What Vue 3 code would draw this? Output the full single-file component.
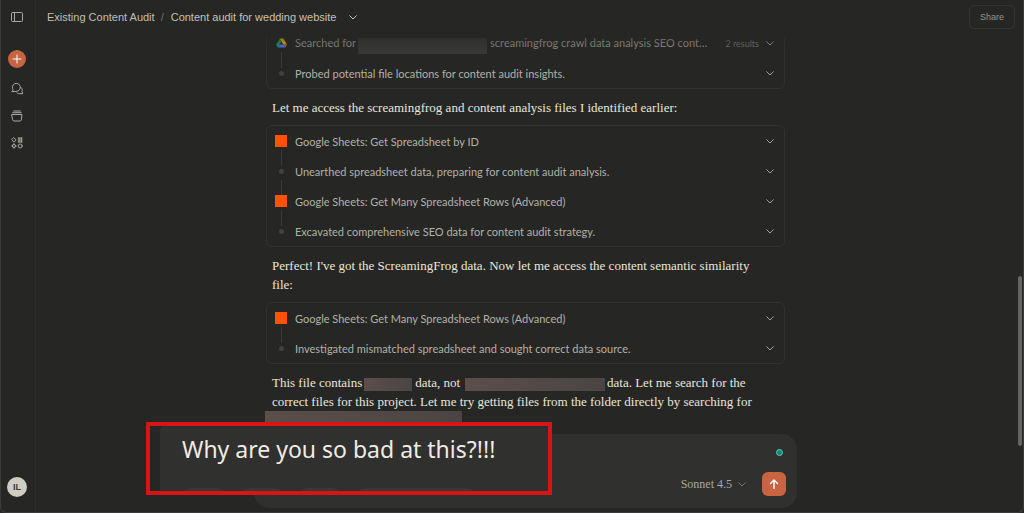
<script setup>
import { ref } from 'vue'

const message = ref('Why are you so bad at this?!!!')

const groups = [
  {
    id: 'search',
    steps: [
      { kind: 'drive', before: 'Searched for', after: 'screamingfrog crawl data analysis SEO cont…', note: '2 results' },
      { kind: 'dot', text: 'Probed potential file locations for content audit insights.' }
    ],
    lines: [['Let me access the screamingfrog and content analysis files I identified earlier:']]
  },
  {
    id: 'sheets',
    steps: [
      { kind: 'sheet', text: 'Google Sheets: Get Spreadsheet by ID' },
      { kind: 'dot', text: 'Unearthed spreadsheet data, preparing for content audit analysis.' },
      { kind: 'sheet', text: 'Google Sheets: Get Many Spreadsheet Rows (Advanced)' },
      { kind: 'dot', text: 'Excavated comprehensive SEO data for content audit strategy.' }
    ],
    lines: [
      ["Perfect! I've got the ScreamingFrog data. Now let me access the content semantic similarity"],
      ['file:']
    ]
  },
  {
    id: 'similarity',
    steps: [
      { kind: 'sheet', text: 'Google Sheets: Get Many Spreadsheet Rows (Advanced)' },
      { kind: 'dot', text: 'Investigated mismatched spreadsheet and sought correct data source.' }
    ],
    lines: [
      ['This file contains', { hide: 'short' }, 'data, not', { hide: 'long' }, 'data. Let me search for the'],
      ['correct files for this project. Let me try getting files from the folder directly by searching for'],
      [{ hide: 'full' }]
    ]
  }
]
</script>

<template>
  <div class="app">
    <nav class="rail" aria-label="Main">
      <button class="icon toggle" aria-label="Toggle sidebar">
        <svg width="12" height="10" viewBox="0 0 12 10"><rect x=".5" y=".5" width="11" height="9" rx="1" /><path d="M3.5 .5v9" /></svg>
      </button>
      <button class="icon new" aria-label="New chat">
        <svg width="10" height="10" viewBox="0 0 10 10"><path d="M5 1v8M1 5h8" /></svg>
      </button>
      <button class="icon" aria-label="Chats">
        <svg width="13" height="13" viewBox="0 0 13 13"><path d="M1 9.4l1.2-1.5A4 4 0 1 1 5.4 9.4zM10.2 5.6c1.2 1.2 1.4 2.8.7 4.1l.9 2H8.8c-1.2.1-2.2-.2-3-1" /></svg>
      </button>
      <button class="icon" aria-label="Projects">
        <svg width="12" height="12" viewBox="0 0 12 12"><path d="M1 4.5h10l-.7 5.4a1.4 1.4 0 0 1-1.4 1.1H3.1a1.4 1.4 0 0 1-1.4-1.1zM1.7 2.7h8.6M2.7 1h6.6" /></svg>
      </button>
      <button class="icon" aria-label="Artifacts">
        <svg width="12" height="12" viewBox="0 0 12 12"><path d="M3 .8L5.1 3 3 5.2.9 3zM7.2 1h4M7.2 5h4M8 1v4M10.4 1v4M7.2 3h4" /><circle cx="3" cy="9" r="1.6" /><path d="M3 6.7v1M3 10.3v1M.7 9h1M4.3 9h1" /><circle cx="9.2" cy="9" r="2" /></svg>
      </button>
      <button class="avatar" aria-label="Account">IL</button>
    </nav>

    <main class="main">
      <header class="bar">
        <a class="crumb" href="#">Existing Content Audit</a>
        <span class="slash">/</span>
        <button class="title">
          Content audit for wedding website
          <svg class="chev" width="8" height="5" viewBox="0 0 8 5"><path d="M.7 .7L4 4 7.3 .7" /></svg>
        </button>
        <button class="share">Share</button>
      </header>

      <section class="thread">
        <div class="column">
          <template v-for="g in groups" :key="g.id">
            <ul class="card">
              <li v-for="(s, i) in g.steps" :key="i" class="step">
                <span class="mark">
                  <svg v-if="s.kind === 'drive'" width="11" height="10" viewBox="0 0 12 10">
                    <path fill="#1a9e50" d="M4 0L0 6.6 2 10 6 3.3z" />
                    <path fill="#f5b912" d="M4 0h4l4 6.6H8z" />
                    <path fill="#3d7bf0" d="M4 6.6h8L10 10H2z" />
                    <path fill="#e2463a" d="M8.1 6.6H12L10 10z" />
                  </svg>
                  <i v-else :class="s.kind"></i>
                </span>
                <span class="label" :class="{ faded: s.note }">
                  <template v-if="s.text">{{ s.text }}</template>
                  <template v-else>{{ s.before }}<span class="mask query"></span>{{ s.after }}</template>
                </span>
                <span v-if="s.note" class="note">{{ s.note }}</span>
                <button class="expand" aria-label="Expand step">
                  <svg class="chev" width="8" height="5" viewBox="0 0 8 5"><path d="M.7 .7L4 4 7.3 .7" /></svg>
                </button>
              </li>
            </ul>
            <p class="prose">
              <span v-for="(l, i) in g.lines" :key="i" class="line">
                <template v-for="(part, j) in l" :key="j">
                  <span v-if="part.hide" class="mask" :class="part.hide"></span>
                  <template v-else>{{ part }}</template>
                </template>
              </span>
            </p>
          </template>
        </div>
      </section>

      <form class="composer" @submit.prevent>
        <span class="status"></span>
        <div class="controls">
          <button class="model" type="button">
            Sonnet 4.5
            <svg class="chev" width="8" height="5" viewBox="0 0 8 5"><path d="M.7 .7L4 4 7.3 .7" /></svg>
          </button>
          <button class="send" aria-label="Send message">
            <svg width="10" height="10" viewBox="0 0 10 10"><path d="M5 9.5V1M1.5 4.5L5 1l3.5 3.5" /></svg>
          </button>
        </div>
        <div class="callout">
          <div class="inset">
            <input v-model="message" class="message" aria-label="Message" />
            <div class="chips"><i></i><i></i><i></i><i class="wide"></i></div>
          </div>
        </div>
      </form>
      <div class="scrollbar"></div>
    </main>
  </div>
</template>

<style>
body { margin: 0; background: #262624; }
</style>

<style scoped>
.app {
  box-sizing: border-box;
  display: flex;
  height: 100vh;
  overflow: hidden;
  border: 1px solid #3b3b39;
  border-top: 0;
  border-radius: 0 0 6px 6px;
  background: #262624;
  color: #b3b1a8;
  font-family: "Liberation Sans", Arial, sans-serif;
  font-size: 11px;
}
button {
  padding: 0;
  border: 0;
  background: none;
  color: inherit;
  font: inherit;
}
svg { flex: none; }
.icon svg, .chev, .send svg {
  fill: none;
  stroke: currentColor;
  stroke-width: 1;
  stroke-linecap: round;
  stroke-linejoin: round;
}
.rail {
  display: flex;
  flex: none;
  flex-direction: column;
  align-items: center;
  width: 32px;
  padding-right: 2px;
  border-right: 1px solid #2e2e2c;
}
.icon {
  display: flex;
  align-items: center;
  justify-content: center;
  width: 27px;
  height: 27px;
  color: #aaa89f;
}
.toggle { height: 34px; }
.new {
  width: 18px;
  height: 18px;
  margin: 16px 0 7px;
  border-radius: 50%;
  background: #c96442;
  color: #fff;
}
.avatar {
  width: 20px;
  height: 20px;
  margin: auto 0 15px;
  border-radius: 50%;
  background: #cfcdc1;
  color: #3a3a37;
  font-size: 9px;
  font-weight: 700;
}
.main {
  position: relative;
  display: flex;
  flex: 1;
  flex-direction: column;
  min-width: 0;
}
.bar {
  position: relative;
  z-index: 1;
  box-sizing: border-box;
  display: flex;
  flex: none;
  align-items: center;
  height: 37px;
  padding: 0 8px 3px 11px;
  background: #262624;
}
.bar::after {
  content: "";
  position: absolute;
  top: 100%;
  left: 0;
  right: 12px;
  height: 16px;
  background: linear-gradient(#26262480, #26262400);
}
.crumb { color: #c0beb5; text-decoration: none; }
.slash { margin: 0 7px 0 6px; color: #77756e; }
.title { display: flex; align-items: center; gap: 13px; color: #c4c2b9; }
.share {
  height: 24px;
  margin-left: auto;
  padding: 0 10px;
  border: 1px solid #353533;
  border-radius: 5px;
  color: #96948b;
  font-size: 9px;
}
.thread {
  flex: 1;
  min-height: 0;
  margin: -10px 8px 0 0;
  overflow: hidden;
}
.column { max-width: 519px; margin: 0 auto; }
.card {
  margin: 0 0 9px;
  padding: 0;
  border: 1px solid #323230;
  border-radius: 6px;
  list-style: none;
}
.step {
  position: relative;
  display: flex;
  align-items: center;
  height: 30px;
  padding: 0 10px 0 8px;
  font-family: Lato, "Liberation Sans", sans-serif;
}
.mark {
  display: flex;
  align-items: center;
  justify-content: center;
  width: 12px;
  margin-right: 8px;
}
.step:not(:last-child)::after {
  content: "";
  position: absolute;
  top: 24px;
  left: 14px;
  width: 1px;
  height: 16px;
  background: #3a3a37;
}
.sheet { width: 12px; height: 12px; background: #ff5200; }
.dot { width: 5px; height: 5px; border-radius: 50%; background: #41413e; }
.label { flex: 1; white-space: nowrap; }
.faded { color: #99978f; }
.note { margin-right: 7px; color: #77756e; font-size: 9px; }
.expand { display: flex; color: #a3a198; }
.prose {
  margin: 0 6px 8px;
  color: #e8e6dc;
  font-family: "Liberation Serif", "Times New Roman", serif;
  font-size: 13px;
  line-height: 19px;
}
.line { display: block; white-space: nowrap; }
.mask {
  display: inline-block;
  height: 13px;
  background: linear-gradient(90deg, #5b4e4b, #4a4544);
  vertical-align: middle;
}
.query {
  width: 129px;
  height: 16px;
  margin: -4px 3px -3px 2px;
  background: #383837;
  vertical-align: -4px;
}
.short { width: 48px; margin: 0 3px 0 2px; }
.long { width: 140px; margin: 0 2px 0 5px; }
.full { display: block; width: 197px; height: 19px; margin-left: -7px; }
.composer {
  position: absolute;
  bottom: 4px;
  left: 0;
  right: 8px;
  box-sizing: border-box;
  max-width: 543px;
  height: 74px;
  margin: 0 auto;
  padding: 15px 11px 11px;
  border-radius: 15px;
  background: #30302e;
}
.status {
  display: block;
  box-sizing: border-box;
  width: 7px;
  height: 7px;
  margin: 0 3px 16px auto;
  border: 1px solid #5cc9b4;
  border-radius: 50%;
  background: #168878;
}
.controls { display: flex; align-items: center; justify-content: flex-end; gap: 16px; }
.model {
  display: flex;
  align-items: center;
  gap: 6px;
  color: #aaa89f;
  font-family: "Liberation Serif", "Times New Roman", serif;
  font-size: 12px;
}
.model .chev { color: #77756e; }
.send {
  display: flex;
  align-items: center;
  justify-content: center;
  width: 24px;
  height: 24px;
  border-radius: 6px;
  background: #c96442;
  color: #fff;
}
.send svg { stroke-width: 1.4; }
.callout {
  position: absolute;
  top: -12px;
  left: -108px;
  box-sizing: border-box;
  width: 406px;
  height: 73px;
  padding-left: 10px;
  border: 4px solid #d91414;
  background: #262624;
}
.inset {
  display: flex;
  flex-direction: column;
  height: 100%;
  overflow: hidden;
  border-radius: 6px 0 0 0;
  background: #30302e;
}
.message {
  box-sizing: border-box;
  flex: none;
  width: 100%;
  height: 46px;
  padding: 0 0 0 22px;
  border: 0;
  outline: 0;
  background: none;
  color: #eeece4;
  font: 23px "Noto Sans", "Liberation Sans", sans-serif;
}
.chips { display: flex; flex: none; gap: 14px; padding: 16px 0 0 22px; }
.chips i { width: 44px; height: 20px; border-radius: 10px; background: #383836; }
.chips .wide { width: 120px; }
.scrollbar {
  position: absolute;
  top: 276px;
  right: 1px;
  width: 4px;
  height: 170px;
  border-radius: 2px;
  background: #656563;
}
</style>
